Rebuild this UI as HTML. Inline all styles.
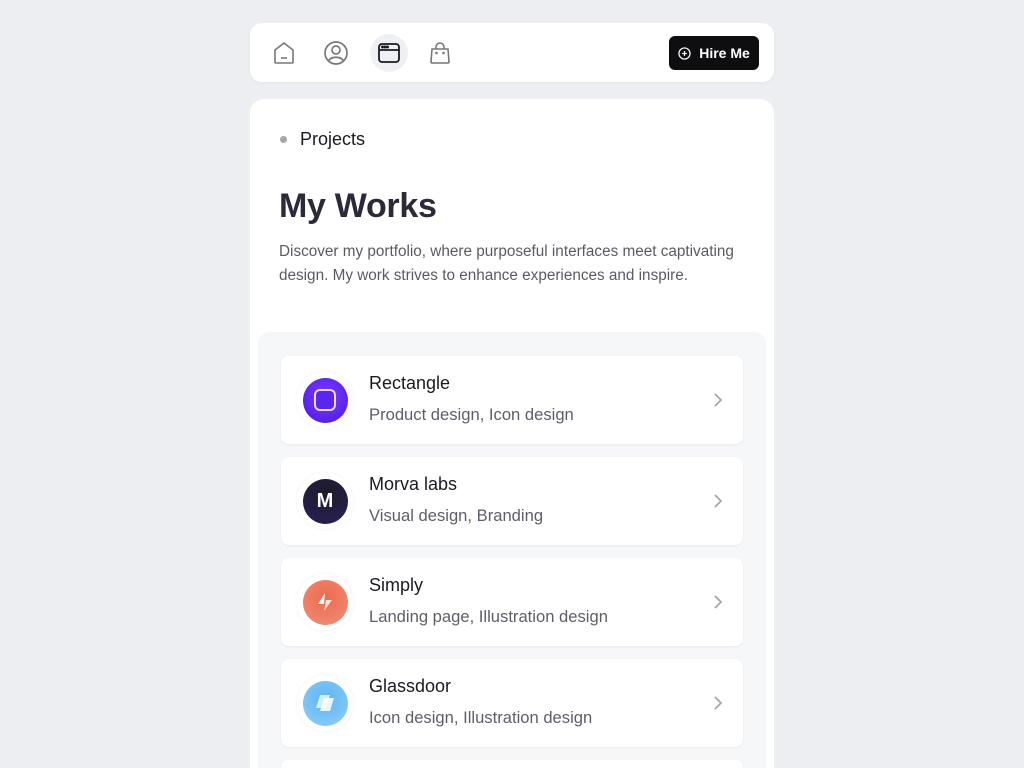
<!DOCTYPE html>
<html><head><meta charset="utf-8"><style>
*{margin:0;padding:0;box-sizing:border-box}
html,body{width:1024px;height:768px;overflow:hidden}
body{background:#eceef2;font-family:"Liberation Sans",sans-serif;position:relative}
.nav{position:absolute;left:250px;top:23px;width:524px;height:59px;background:#fff;border-radius:12px;box-shadow:0 1px 3px rgba(0,0,0,.04)}
.ic{position:absolute;top:12px;width:36px;height:36px;border-radius:50%;display:flex;align-items:center;justify-content:center}
.hire{position:absolute;left:419px;top:13px;width:90px;height:34px;background:#0e0e10;border-radius:6px;color:#fff;font-weight:bold;font-size:14px;display:flex;align-items:center;justify-content:center;gap:8px}
.main{position:absolute;left:250px;top:99px;width:524px;height:669px;background:#fff;border-radius:14px 14px 0 0;overflow:hidden}
.crumb{position:absolute;left:30px;top:30px;font-size:18px;color:#1a1a22}
.crumb:before{content:"";position:absolute;left:0;top:7px;width:7px;height:7px;border-radius:50%;background:#a6a6ab}
.crumb span{margin-left:20px}
h1{position:absolute;left:29px;top:88px;font-size:34px;color:#2a2a38;font-weight:bold;letter-spacing:-.3px}
p.d{position:absolute;left:29px;top:141px;width:490px;font-size:15.3px;line-height:24px;color:#5a5a66}
.panel{position:absolute;left:8px;top:233px;width:508px;height:600px;background:#f6f7f9;border-radius:12px}
.item{position:absolute;left:23px;width:462px;height:88px;background:#fff;border-radius:8px;box-shadow:0 1px 2px rgba(0,0,0,.06)}
.ring{position:absolute;left:16px;top:16px;width:56px;height:56px;border-radius:50%;background:#fff;box-shadow:0 0 4px rgba(0,0,0,.06);display:flex;align-items:center;justify-content:center}
.c{width:45px;height:45px;border-radius:50%;display:flex;align-items:center;justify-content:center}
.t{position:absolute;left:88px;top:17px;font-size:18px;color:#1a1a22}
.s{position:absolute;left:88px;top:49px;font-size:16.6px;color:#5e5e6a}
.ch{position:absolute;right:20px;top:36px}
</style></head><body>
<div class="nav">
<div class="ic" style="left:16px"><svg width="22" height="24" viewBox="0 0 22 24" fill="none" stroke="#777" stroke-width="1.6"><path d="M2 9 L11 2 L20 9 V21 a1 1 0 0 1 -1 1 H3 a1 1 0 0 1 -1 -1 Z"/><path d="M8 17 H14"/></svg></div>
<div class="ic" style="left:68px"><svg width="26" height="26" viewBox="0 0 26 26" fill="none" stroke="#777" stroke-width="1.7"><circle cx="13" cy="13" r="11"/><circle cx="13" cy="10" r="4"/><path d="M5.5 21 C8 16 18 16 20.5 21"/></svg></div>
<div class="ic" style="left:120px;background:#eef0f3;width:38px;height:38px;top:11px"><svg width="24" height="22" viewBox="0 0 24 22" fill="none" stroke="#1a1a22" stroke-width="1.8"><rect x="2" y="2" width="20" height="18" rx="3"/><path d="M2 8 H22"/><circle cx="5.5" cy="5" r=".6" fill="#1a1a22"/><circle cx="8" cy="5" r=".6" fill="#1a1a22"/><circle cx="10.5" cy="5" r=".6" fill="#1a1a22"/></svg></div>
<div class="ic" style="left:172px"><svg width="22" height="24" viewBox="0 0 22 24" fill="none" stroke="#777" stroke-width="1.6"><path d="M3 8 H19 L20 21 a1 1 0 0 1 -1 1 H3 a1 1 0 0 1 -1 -1 Z"/><path d="M7 8 V6 a4 4 0 0 1 8 0 V8"/><circle cx="7.5" cy="12" r=".5" fill="#777"/><circle cx="14.5" cy="12" r=".5" fill="#777"/></svg></div>
<div class="hire"><svg width="13" height="13" viewBox="0 0 14 14" fill="none" stroke="#fff" stroke-width="1.3"><circle cx="7" cy="7" r="6"/><path d="M7 4.5V9.5M4.5 7H9.5"/></svg>Hire Me</div>
</div>
<div class="main">
<div class="crumb"><span>Projects</span></div>
<h1>My Works</h1>
<p class="d">Discover my portfolio, where purposeful interfaces meet captivating design. My work strives to enhance experiences and inspire.</p>
<div class="panel">
<div class="item" style="top:24px"><div class="ring"><div class="c" style="background:radial-gradient(circle at 50% 40%,#7a3cff,#4b17e0)"><div style="width:22px;height:22px;border:2.5px solid #e7dcff;border-radius:6px;background:#5a25ee"></div></div></div><div class="t">Rectangle</div><div class="s">Product design, Icon design</div><svg class="ch" width="10" height="16" viewBox="0 0 10 16" fill="none" stroke="#a0a0a8" stroke-width="1.6"><path d="M2 2 L8 8 L2 14"/></svg></div>
<div class="item" style="top:125px"><div class="ring"><div class="c" style="background:radial-gradient(circle at 50% 30%,#1c1c24,#2a1f5c)"><span style="color:#fff;font-weight:bold;font-size:20px">M</span></div></div><div class="t">Morva labs</div><div class="s">Visual design, Branding</div><svg class="ch" width="10" height="16" viewBox="0 0 10 16" fill="none" stroke="#a0a0a8" stroke-width="1.6"><path d="M2 2 L8 8 L2 14"/></svg></div>
<div class="item" style="top:226px"><div class="ring"><div class="c" style="background:radial-gradient(circle at 50% 40%,#ec6a4d,#f0907a)"><svg width="20" height="22" viewBox="0 0 20 22"><path d="M10 2 L3 13 H9 Z" fill="#fff"/><path d="M11 9 H17 L9 20 Z" fill="#fde0d8"/></svg></div></div><div class="t">Simply</div><div class="s">Landing page, Illustration design</div><svg class="ch" width="10" height="16" viewBox="0 0 10 16" fill="none" stroke="#a0a0a8" stroke-width="1.6"><path d="M2 2 L8 8 L2 14"/></svg></div>
<div class="item" style="top:327px"><div class="ring"><div class="c" style="background:radial-gradient(circle at 50% 40%,#5fb4f0,#8fd0f8)"><svg width="24" height="20" viewBox="0 0 24 20"><path d="M7 2 H17 L13 15 H3 Z" fill="#d5ecfc"/><path d="M11 5 H21 L17 18 H7 Z" fill="#fff" opacity=".85"/></svg></div></div><div class="t">Glassdoor</div><div class="s">Icon design, Illustration design</div><svg class="ch" width="10" height="16" viewBox="0 0 10 16" fill="none" stroke="#a0a0a8" stroke-width="1.6"><path d="M2 2 L8 8 L2 14"/></svg></div>
<div class="item" style="top:428px"></div>
</div>
</div>
</body></html>
